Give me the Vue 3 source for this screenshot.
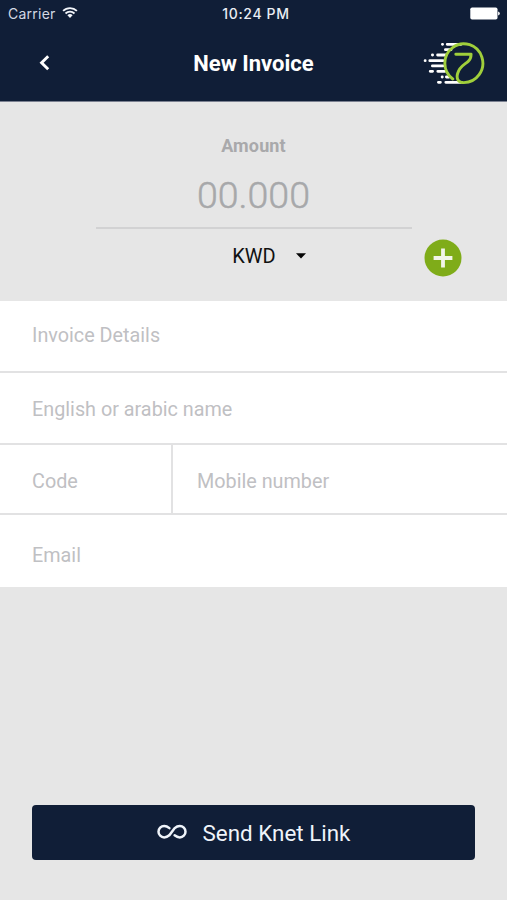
<script setup>
import { ref } from 'vue'

const currency = ref('KWD')
</script>

<template>
  <main class="screen">
    <header class="header">
      <div class="status">
        <div class="carrier">
          <span class="carrier-name">Carrier</span>
          <svg class="wifi" width="16" height="13" viewBox="0 0 16 13" fill="none" stroke="#f3f6fb" stroke-width="1.8">
            <path d="M1.1 4.9A9.8 9.8 0 0 1 14.9 4.9" />
            <path d="M3.5 7.5A6.4 6.4 0 0 1 12.5 7.5" />
            <path d="M5.4 9.3A3.7 3.7 0 0 1 10.6 9.3L8 12Z" fill="#f3f6fb" stroke="none" />
          </svg>
        </div>
        <span class="time">10:24 PM</span>
        <svg class="battery" width="30" height="13" viewBox="0 0 30 13" fill="#fff">
          <rect x="0.3" y="0.5" width="27.2" height="12" rx="1.8" />
          <path d="M28.1 4.5Q29.8 5 29.8 6.5T28.1 8.5Z" />
        </svg>
      </div>
      <div class="nav">
        <svg class="back" width="12" height="18" viewBox="0 0 12 18" fill="none" stroke="#fff" stroke-width="2.9">
          <path d="M10.2 2.2L3.6 8.7L10.2 15.2" />
        </svg>
        <h1 class="title">New Invoice</h1>
        <svg class="logo" width="64" height="48" viewBox="0 0 64 48" fill="none" stroke-linecap="round" stroke-linejoin="round">
          <g stroke="#fff" stroke-width="2.8">
            <path d="M21.4 5.3h.2M26.2 5.3H40M24.4 10.7H30M11.4 16h.2M16.6 16H25M4.1 21.7h.1M8.8 21.7H22M11.4 26.9H22M9.2 32.3h2.4M16.8 32.3H24M21.1 38h.2M25.4 38H28M17.4 43.3h2M24.8 43.3H40" />
          </g>
          <path d="M31.8 40A19 19.4 0 1 1 42.7 43.6C37 43.6 35.2 39.5 36.6 34.5C38.4 27.5 43.7 25.6 47.2 22.4C49.2 20.5 50.1 18.8 50.1 15.2H34.8" stroke="#a0cf3b" stroke-width="2.9" />
        </svg>
      </div>
    </header>

    <section class="amount">
      <label class="amount-label">Amount</label>
      <div class="amount-value">00.000</div>
      <div class="currency-row">
        <div class="currency">
          <span class="currency-code">{{ currency }}</span>
          <svg width="10" height="6" viewBox="0 0 10 6"><path d="M0 0.3H10L5 5.6Z" fill="#050505" /></svg>
        </div>
        <svg class="add" width="38" height="38" viewBox="0 0 38 38">
          <circle cx="19" cy="19" r="18.5" fill="#7fac19" />
          <path d="M9.6 19H28.4M19 9.6V28.4" stroke="#f2f5e9" stroke-width="3.8" />
        </svg>
      </div>
    </section>

    <section class="form">
      <div class="field details"><span>Invoice Details</span></div>
      <div class="field name"><span>English or arabic name</span></div>
      <div class="phone">
        <div class="field code"><span>Code</span></div>
        <div class="field mobile"><span>Mobile number</span></div>
      </div>
      <div class="field email"><span>Email</span></div>
    </section>

    <footer class="footer">
      <button class="send">
        <svg width="30" height="16" viewBox="0 0 30 16" fill="none" stroke="#eff4fa" stroke-width="2.5" stroke-linecap="round">
          <path d="M12.4 4.1C10.8 2.8 9.2 2 7.2 2A5.7 5.7 0 0 0 7.2 13.4C9.2 13.4 10.6 12.8 12.3 11.3L17.7 4.1C19.4 2.6 20.8 2 22.8 2A5.7 5.7 0 0 1 22.8 13.4C20.8 13.4 19.2 12.6 17.6 11.3" />
        </svg>
        <span>Send Knet Link</span>
      </button>
    </footer>
  </main>
</template>

<style>
body {
  background: #e6e6e6;
}
</style>

<style scoped>
.screen {
  display: flex;
  flex-direction: column;
  width: 507px;
  height: 900px;
  overflow: hidden;
  background: #e6e6e6;
  font-family: Roboto, "Liberation Sans", sans-serif;
}

.header {
  box-sizing: border-box;
  height: 102px;
  background: #101e37;
  border-bottom: 1px solid #7b8191;
  color: #fff;
}

.status {
  display: grid;
  grid-template-columns: 1fr auto 1fr;
  align-items: center;
  height: 27px;
  padding: 0 7px 0 8px;
  font-family: Inter, sans-serif;
}

.carrier {
  display: flex;
  align-items: center;
  gap: 6px;
}

.carrier-name {
  color: #d3d9e4;
  font-size: 14px;
  letter-spacing: 0.25px;
}

.wifi {
  margin-top: -2px;
}

.time {
  padding-left: 4px;
  color: #e9edf4;
  font-size: 14px;
  font-weight: 500;
  letter-spacing: 0.65px;
}

.battery {
  justify-self: end;
}

.nav {
  display: grid;
  grid-template-columns: 80px 1fr 80px;
  align-items: center;
  height: 72px;
  padding: 0 22px 0 38px;
}

.title {
  margin: 0;
  padding: 2px 16px 0 0;
  font-size: 22px;
  font-weight: 700;
  line-height: 28px;
  text-align: center;
  white-space: nowrap;
}

.logo {
  justify-self: end;
}

.amount {
  display: flex;
  flex-direction: column;
  align-items: center;
  box-sizing: border-box;
  height: 199px;
  padding-top: 32px;
}

.amount-label {
  color: #a9a9ab;
  font-size: 18px;
  font-weight: 700;
  letter-spacing: 0.15px;
  line-height: 24px;
}

.amount-value {
  box-sizing: border-box;
  width: 316px;
  height: 71px;
  padding-top: 13px;
  border-bottom: 2px solid #d2d2d3;
  color: #a7a8aa;
  font-size: 37.5px;
  font-weight: 300;
  -webkit-text-stroke: 0.5px #a7a8aa;
  line-height: 48px;
  text-align: center;
}

.currency-row {
  display: grid;
  grid-template-columns: 1fr auto 1fr;
  align-items: center;
  align-self: stretch;
  height: 58px;
  padding: 0 45px 0 76px;
}

.currency {
  display: flex;
  align-items: center;
  grid-column: 2;
  gap: 20px;
  padding-bottom: 4px;
}

.currency-code {
  color: #111;
  font-size: 20px;
}

.add {
  justify-self: end;
}

.form {
  height: 286px;
  background: #fff;
}

.field {
  display: flex;
  align-items: center;
  box-sizing: border-box;
  padding-left: 32px;
  border-bottom: 2px solid #e2e2e3;
  color: #bfc0c3;
  font-size: 19.8px;
  line-height: 24px;
  white-space: nowrap;
}

.details {
  height: 72px;
}

.name {
  height: 72px;
  padding-top: 3px;
}

.phone {
  display: grid;
  grid-template-columns: 173px 1fr;
  height: 70px;
}

.code,
.mobile {
  padding-top: 6px;
}

.code {
  border-right: 2px solid #e2e2e3;
}

.mobile {
  padding-left: 24px;
}

.email {
  height: 72px;
  padding-top: 10px;
  border-bottom: 0;
}

.footer {
  padding: 218px 32px 0;
}

.send {
  display: flex;
  align-items: center;
  justify-content: center;
  gap: 16px;
  width: 443px;
  height: 55px;
  padding: 0;
  border: 0;
  border-radius: 4px;
  background: #101e37;
  color: #eff4fa;
  font: 400 22.4px/28px Roboto, sans-serif;
}

.send svg {
  margin-top: -1px;
}
</style>
